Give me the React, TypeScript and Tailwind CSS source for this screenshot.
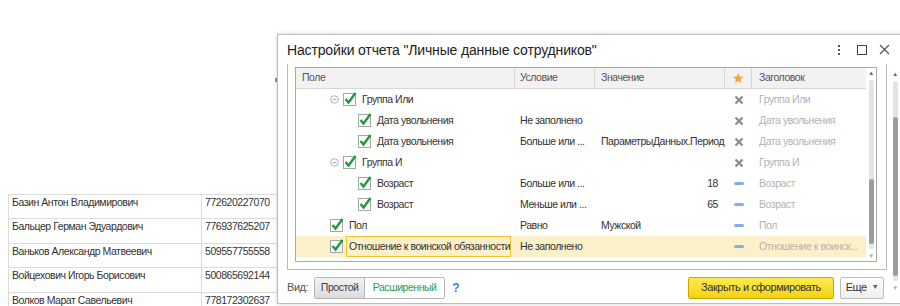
import React from "react";

const people = [
  { name: "Базин Антон Владимирович", inn: "772620227070" },
  { name: "Бальцер Герман Эдуардович", inn: "776937625207" },
  { name: "Ваньков Александр Матвеевич", inn: "509557755558" },
  { name: "Войцехович Игорь Борисович", inn: "500865692144" },
  { name: "Волков Марат Савельевич", inn: "778172302637" },
];

type Row = {
  kind: "group" | "leaf" | "top";
  field: string;
  cond?: string;
  value?: string;
  numeric?: boolean;
  mark: "x" | "dash";
  title: string;
  active?: boolean;
};

const rows: Row[] = [
  { kind: "group", field: "Группа Или", mark: "x", title: "Группа Или" },
  { kind: "leaf", field: "Дата увольнения", cond: "Не заполнено", mark: "x", title: "Дата увольнения" },
  { kind: "leaf", field: "Дата увольнения", cond: "Больше или ...", value: "ПараметрыДанных.Период", mark: "x", title: "Дата увольнения" },
  { kind: "group", field: "Группа И", mark: "x", title: "Группа И" },
  { kind: "leaf", field: "Возраст", cond: "Больше или ...", value: "18", numeric: true, mark: "dash", title: "Возраст" },
  { kind: "leaf", field: "Возраст", cond: "Меньше или ...", value: "65", numeric: true, mark: "dash", title: "Возраст" },
  { kind: "top", field: "Пол", cond: "Равно", value: "Мужской", mark: "dash", title: "Пол" },
  { kind: "top", field: "Отношение к воинской обязанности", cond: "Не заполнено", mark: "dash", title: "Отношение к воинск...", active: true },
];

function CheckBox() {
  return (
    <div className="relative w-[13px] h-[13px] shrink-0 border border-[#a6a6a6] bg-white">
      <svg className="absolute -left-[1px] -top-[3px]" width="15" height="15" viewBox="0 0 15 15">
        <path d="M2.5 8 L5.5 11.5 L12.5 2" fill="none" stroke="#1f9a3c" strokeWidth="2.4" />
      </svg>
    </div>
  );
}

function Collapse() {
  return (
    <svg width="9" height="9" viewBox="0 0 9 9" className="shrink-0">
      <circle cx="4.5" cy="4.5" r="3.8" fill="none" stroke="#b0b0b0" strokeWidth="1" />
      <path d="M2.5 4.5 H6.5" stroke="#b0b0b0" strokeWidth="1" />
    </svg>
  );
}

function Mark({ type }: { type: "x" | "dash" }) {
  if (type === "x") {
    return (
      <svg width="10" height="10" viewBox="0 0 10 10">
        <path d="M1.5 1.5 L8.5 8.5 M8.5 1.5 L1.5 8.5" stroke="#8c8c8c" strokeWidth="2.2" />
      </svg>
    );
  }
  return <div className="w-[10px] h-[3px] rounded-sm bg-[#85aee0]" />;
}

function ScrollBar({ thumbTop, thumbH, h }: { thumbTop: number; thumbH: number; h: number }) {
  return (
    <div className="flex flex-col items-center w-[10px]" style={{ height: h }}>
      <div className="h-[10px] flex items-center justify-center text-[6px] text-[#666] leading-none">▲</div>
      <div className="relative flex-1 w-[5px] rounded-full bg-[#e4e4e4] mt-[2px] mb-[2px]">
        <div className="absolute left-0 w-[5px] rounded-full bg-[#9c9c9c]" style={{ top: thumbTop, height: thumbH }} />
      </div>
      <div className="h-[10px] flex items-center justify-center text-[6px] text-[#aaa] leading-none">▼</div>
    </div>
  );
}

function FilterRow({ r }: { r: Row }) {
  return (
    <div className={`flex h-[21px] items-center ${r.active ? "bg-[#fcf0c8]" : ""}`}>
      <div className="w-[219px] h-full flex items-center">
        {r.kind === "group" && (
          <div className="flex items-center pl-[34px]">
            <Collapse />
            <div className="w-[4px]" />
            <CheckBox />
            <span className="pl-[6px] text-[#333]">{r.field}</span>
          </div>
        )}
        {r.kind === "leaf" && (
          <div className="flex items-center pl-[62px]">
            <CheckBox />
            <span className="pl-[6px] text-[#333]">{r.field}</span>
          </div>
        )}
        {r.kind === "top" && (
          <div className="flex items-center pl-[34px] h-full">
            <CheckBox />
            {r.active ? (
              <div className="ml-[3px] h-full w-[165px] flex items-center border border-[#f2c230] pl-[2px] text-[#333] whitespace-nowrap">
                {r.field}
              </div>
            ) : (
              <span className="pl-[6px] text-[#333]">{r.field}</span>
            )}
          </div>
        )}
      </div>
      <div className="w-[80px] pl-[5px] text-[#333] whitespace-nowrap">{r.cond}</div>
      <div className={`w-[130px] text-[#333] whitespace-nowrap ${r.numeric ? "text-right pr-[7px]" : "pl-[6px]"}`}>{r.value}</div>
      <div className="w-[27px] flex justify-center">
        <Mark type={r.mark} />
      </div>
      <div className="w-[114px] pl-[7px] text-[#b3b3b3] whitespace-nowrap">{r.title}</div>
    </div>
  );
}

export default function App() {
  return (
    <div className="relative w-[900px] h-[306px] overflow-hidden bg-white font-['Liberation_Sans',Arial,sans-serif] text-[10.5px] tracking-[-0.45px]">
      {/* Report behind the dialog */}
      <div className="pt-[194px] pl-[8px]">
        <div className="w-[300px] border-t border-l border-[#dcdcdc]">
          {people.map((p) => (
            <div key={p.inn} className="flex h-[24.4px] border-b border-[#dcdcdc] text-[#333] leading-[14px]">
              <div className="w-[193px] border-r border-[#dcdcdc] pl-[3px]">{p.name}</div>
              <div className="pl-[3px]">{p.inn}</div>
            </div>
          ))}
        </div>
      </div>
      <div className="absolute left-[275px] top-[78px] w-[3px] h-[4px] bg-[#b08a60]" />

      {/* Dialog */}
      <div className="absolute left-[277px] top-[34px] w-[640px] h-[270px] bg-white border border-[#bdbdbd] shadow-[0_0_4px_rgba(0,0,0,0.18)]">
        <div className="flex items-center h-[29px] pl-[9px] pr-[26px]">
          <div className="text-[14px] tracking-[-0.15px] text-[#222] flex-1 whitespace-nowrap pt-[1px]">
            Настройки отчета "Личные данные сотрудников"
          </div>
          <div className="flex items-center h-full">
            <div className="w-[8px] flex flex-col items-center gap-[2px]">
              <div className="w-[2px] h-[2px] bg-[#555]" />
              <div className="w-[2px] h-[2px] bg-[#555]" />
              <div className="w-[2px] h-[2px] bg-[#555]" />
            </div>
            <div className="ml-[14px] w-[10px] h-[10px] border-[1.5px] border-[#444]" />
            <svg className="ml-[12px]" width="11" height="11" viewBox="0 0 11 11">
              <path d="M1 1 L10 10 M10 1 L1 10" stroke="#555" strokeWidth="1.2" />
            </svg>
          </div>
        </div>

        <div className="flex">
          {/* scrollable content */}
          <div className="w-[609px] pl-[9px]">
            <div className="h-[206px] w-[600px] border-l border-r border-b border-[#b9b9b9] pl-[7px] pr-[9px] pt-[3px]">
              <div className="flex h-[195px] border border-[#a9a9a9]">
                <div className="w-[570px]">
                  <div className="flex h-[21px] items-center bg-[#f2f2f2] border-b border-[#d6d6d6] text-[#555]">
                    <div className="w-[219px] pl-[6px] h-full flex items-center border-r border-[#d6d6d6]">Поле</div>
                    <div className="w-[80px] pl-[5px] h-full flex items-center border-r border-[#d6d6d6]">Условие</div>
                    <div className="w-[130px] pl-[6px] h-full flex items-center border-r border-[#d6d6d6]">Значение</div>
                    <div className="w-[27px] h-full flex items-center justify-center border-r border-[#d6d6d6] text-[#f5a623] text-[14px]">★</div>
                    <div className="w-[114px] pl-[7px]">Заголовок</div>
                  </div>
                  {rows.map((r, i) => (
                    <FilterRow key={i} r={r} />
                  ))}
                </div>
                <ScrollBar h={193} thumbTop={99} thumbH={65} />
              </div>
            </div>

            <div className="flex items-center h-[35px] pr-[3px]">
              <span className="text-[#555] text-[11px]">Вид:</span>
              <div className="ml-[6px] flex h-[22px] border border-[#b5b5b5] rounded-[2px] overflow-hidden">
                <div className="w-[50px] flex items-center justify-center bg-gradient-to-b from-[#f2f2f2] to-[#dcdcdc] border-r border-[#b5b5b5] text-[#444]">
                  Простой
                </div>
                <div className="w-[79px] flex items-center justify-center bg-white text-[#2e9a4e]">Расширенный</div>
              </div>
              <span className="ml-[7px] text-[#3b7fd0] font-bold text-[12px]">?</span>
              <div className="flex-1" />
              <div className="h-[22px] w-[146px] flex items-center justify-center rounded-[2px] border border-[#c8a800] bg-gradient-to-b from-[#ffea4d] to-[#f4d300] text-[#333] text-[11px]">
                Закрыть и сформировать
              </div>
              <div className="ml-[6px] h-[22px] w-[44px] flex items-center justify-center gap-[5px] rounded-[2px] border border-[#bdbdbd] bg-gradient-to-b from-white to-[#eeeeee] text-[#333] text-[11px]">
                Еще <span className="text-[7px] text-[#555]">▼</span>
              </div>
            </div>
          </div>
          {/* dialog scrollbar */}
          <div className="ml-[3px] mt-[5px]">
            <ScrollBar h={224} thumbTop={36} thumbH={159} />
          </div>
        </div>
      </div>
    </div>
  );
}
